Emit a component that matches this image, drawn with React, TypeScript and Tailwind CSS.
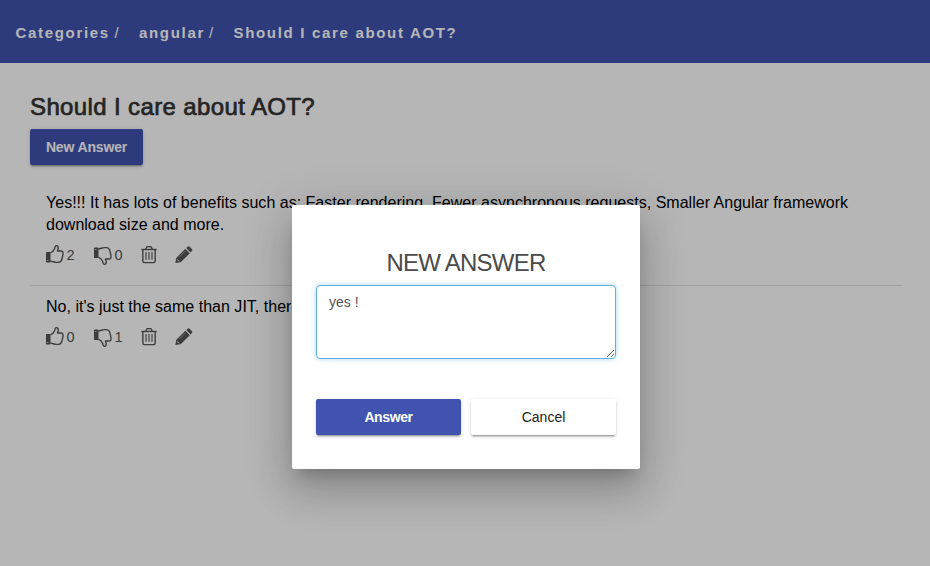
import React from 'react';

function ThumbShape() {
  return (
    <>
      <path d="M13 23.500 C19 21 24 16 26 10.500 C27 7 27.500 2 30.500 2 C35 2 37 6 36.500 10 C36 13 34.500 15 34.500 18 H45 C49 18 51.500 21 51 25 C50.500 32 49 38 47.500 43 C46 49 42 52 37 52 H31 C25 52 20 49 13 48.500" fill="none" stroke="currentColor" strokeWidth="4.200" strokeLinejoin="round" />
      <path d="M2 21 H11 Q13.500 21 13.500 23.500 V50 Q13.500 52.500 11 52.500 H2 Q0 52.500 0 50 V23.500 Q0 21 2 21Z" fill="currentColor" />
      <circle cx="5.500" cy="46.500" r="1.800" fill="#fff" />
    </>
  );
}

function ThumbUpIcon() {
  return <svg className="h-[19px] w-[18px] shrink-0 self-start" viewBox="0 0 54 57"><ThumbShape /></svg>;
}

function ThumbDownIcon() {
  return <svg className="h-[19px] w-[18px] shrink-0 -scale-y-100 self-end" viewBox="0 0 54 57"><ThumbShape /></svg>;
}

function TrashIcon() {
  return (
    <svg className="h-[18px] w-4 shrink-0" viewBox="0 0 48 54" fill="none" stroke="currentColor" strokeWidth="4.200">
      <path d="M1 10.500 H47" />
      <path d="M14.500 10 L16.500 4.500 Q17.300 2 20 2 H28 Q30.700 2 31.500 4.500 L33.500 10" />
      <path d="M5.500 10 V45 Q5.500 50 10.500 50 H37.500 Q42.500 50 42.500 45 V10" />
      <path d="M15 18 V41 M24 18 V41 M33 18 V41" strokeWidth="3.400" />
    </svg>
  );
}

function PencilIcon() {
  return (
    <svg className="h-[18px] w-[18px] shrink-0" viewBox="0 0 54 54">
      <path d="M1 51 L3.500 36 L31 8.500 L44.500 22 L17 48.500Z" fill="currentColor" />
      <path d="M33.500 6 L38 2 Q41 -0.500 44 2.500 L50.500 9 Q53.500 12 50.500 15 L47 19.500Z" fill="currentColor" />
      <path d="M6 40 L12.500 46.500" stroke="#fff" strokeWidth="2.800" />
      <path d="M13 33 L31 15" stroke="#fff" strokeWidth="1.200" />
    </svg>
  );
}

function Answer({ lines, up, down }: { lines: string[]; up: number; down: number }) {
  return (
    <li className="flex flex-col px-4 text-[16px] leading-[22px] text-black">
      {lines.map((line) => (
        <span key={line} className="whitespace-nowrap tracking-[0.012px]">{line}</span>
      ))}
      <div className="mt-[9px] flex h-[20px] items-center text-[14.500px] leading-5 text-[#555]">
        <ThumbUpIcon />
        <span className="ml-[2.500px] w-[27px]">{up}</span>
        <ThumbDownIcon />
        <span className="ml-[3px] w-[26.500px]">{down}</span>
        <TrashIcon />
        <span className="w-[18px]" />
        <PencilIcon />
      </div>
    </li>
  );
}

export default function App() {
  return (
    <div className="relative h-[566px] w-[930px] overflow-hidden bg-white font-['Liberation_Sans',Arial,sans-serif]">
      <header className="flex h-[63px] items-center bg-[#3f53af] pb-px pl-[15.500px] pt-[3px] text-[15px] font-bold leading-5 tracking-[1.680px] text-white">
        <span className="w-[99px] whitespace-nowrap">Categories</span>
        <span className="w-[24.500px] font-normal">/</span>
        <span className="w-[70px] whitespace-nowrap">angular</span>
        <span className="w-[24.500px] font-normal">/</span>
        <span className="whitespace-nowrap">Should I care about AOT?</span>
      </header>

      <main className="pl-[30px] pr-7 pt-7">
        <h1 className="text-[24px] leading-[32px] tracking-[0.370px] text-[#333] [-webkit-text-stroke:0.700px_#333]">Should I care about AOT?</h1>
        <button className="mt-[6px] block h-9 w-[113px] rounded-[2px] bg-[#3f53af] text-[14px] font-bold leading-9 tracking-[-0.150px] text-white shadow-[0_3px_1px_-2px_rgba(0,0,0,.2),0_2px_2px_rgba(0,0,0,.14),0_1px_5px_rgba(0,0,0,.12)]">New Answer</button>
        <ul className="mt-[27px]">
          <Answer
            lines={[
              'Yes!!! It has lots of benefits such as: Faster rendering, Fewer asynchronous requests, Smaller Angular framework',
              'download size and more.',
            ]}
            up={2}
            down={0}
          />
          <li className="mb-[10px] mt-5 h-px bg-[#e0e0e0]" />
          <Answer lines={["No, it's just the same than JIT, there is no difference"]} up={0} down={1} />
        </ul>
      </main>

      <div className="absolute inset-0 flex items-start justify-center bg-black/[.288] pl-[2px] pt-[205px]">
        <section className="h-[264px] w-[348px] rounded-[2px] bg-white px-6 pt-[42px] shadow-[0_11px_15px_-7px_rgba(0,0,0,.2),0_24px_38px_3px_rgba(0,0,0,.14),0_9px_46px_8px_rgba(0,0,0,.12)]">
          <h2 className="text-center text-[24px] leading-[32px] tracking-[-0.750px] text-[#4a4a4a]">NEW ANSWER</h2>
          <textarea
            className="mt-[6px] block h-[74px] w-[300px] resize rounded-[4px] border border-[#5bafe2] bg-white px-3 py-[6px] text-[14px] leading-5 text-[#555] shadow-[0_0_5px_rgba(91,175,226,.5)] outline-none"
            defaultValue="yes !"
          />
          <div className="mt-10 flex gap-[10px] text-[14px] leading-9">
            <button className="h-9 w-[145px] rounded-[2px] bg-[#3f53af] font-bold tracking-[-0.400px] text-white shadow-[0_3px_1px_-2px_rgba(0,0,0,.2),0_2px_2px_rgba(0,0,0,.14),0_1px_5px_rgba(0,0,0,.12)]">Answer</button>
            <button className="h-9 w-[145px] rounded-[2px] bg-white text-[#222] shadow-[0_3px_1px_-2px_rgba(0,0,0,.2),0_2px_2px_rgba(0,0,0,.14),0_1px_5px_rgba(0,0,0,.12)]">Cancel</button>
          </div>
        </section>
      </div>
    </div>
  );
}
